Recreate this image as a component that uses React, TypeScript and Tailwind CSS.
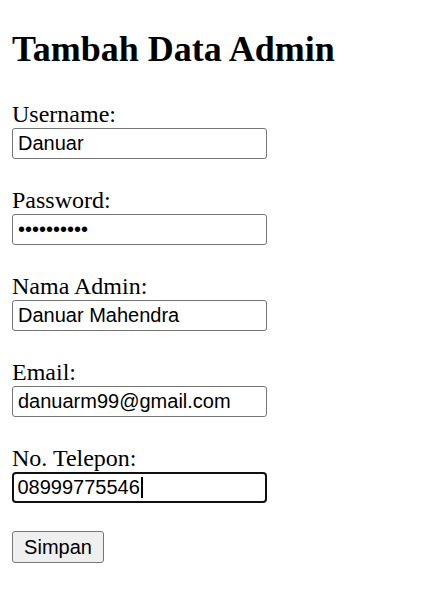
import { useState } from 'react';

type Field = {
  label: string;
  name: string;
  type: string;
  value: string;
};

const fields: Field[] = [
  { label: 'Username:', name: 'username', type: 'text', value: 'Danuar' },
  { label: 'Password:', name: 'password', type: 'password', value: 'danuar1234' },
  { label: 'Nama Admin:', name: 'nama_admin', type: 'text', value: 'Danuar Mahendra' },
  { label: 'Email:', name: 'email', type: 'email', value: 'danuarm99@gmail.com' },
];

const inputClass =
  'block w-[255px] h-[31px] border border-[#767676] rounded-[3px] pl-[5px] pr-[3px] text-[20px] text-black bg-white outline-none';

const App = () => {
  const [values, setValues] = useState<Record<string, string>>(
    Object.fromEntries(fields.map((f) => [f.name, f.value]))
  );
  const [phone, setPhone] = useState('08999775546');

  return (
    <div
      className="px-[12px] pb-[12px] text-black bg-white min-h-[594px]"
      style={{ fontFamily: '"Liberation Serif", "Times New Roman", serif' }}
    >
      <h2 className="pt-[29px] text-[36px] leading-[41px] font-bold">
        Tambah Data Admin
      </h2>
      <form className="mt-[30px] flex flex-col" onSubmit={(e) => e.preventDefault()}>
        {fields.map((f) => (
          <div key={f.name} className="mb-[27px]">
            <label htmlFor={f.name} className="block text-[24px] leading-[28px]">
              {f.label}
            </label>
            <input
              id={f.name}
              name={f.name}
              type={f.type}
              value={values[f.name]}
              onChange={(e) => setValues({ ...values, [f.name]: e.target.value })}
              className={inputClass}
              style={{ fontFamily: '"Liberation Sans", Arial, sans-serif' }}
            />
          </div>
        ))}
        <div className="mb-[28px]">
          <label htmlFor="no_telepon" className="block text-[24px] leading-[28px]">
            No. Telepon:
          </label>
          <div className="relative w-[255px]">
            <input
              id="no_telepon"
              name="no_telepon"
              type="text"
              value={phone}
              onChange={(e) => setPhone(e.target.value)}
              className="block w-[255px] h-[31px] border-[2.5px] border-[#101010] rounded-[4px] pl-[3.5px] pr-[3px] text-[20px] text-black bg-white outline-none"
              style={{ fontFamily: '"Liberation Sans", Arial, sans-serif' }}
            />
            <span className="absolute left-[129px] top-[5px] w-[1.5px] h-[21px] bg-black" />
          </div>
        </div>
        <button
          type="submit"
          className="w-[92px] h-[32px] border border-[#767676] rounded-[3px] bg-[#efefef] text-[20px] text-black"
          style={{ fontFamily: '"Liberation Sans", Arial, sans-serif' }}
        >
          Simpan
        </button>
      </form>
    </div>
  );
};

export default App;
